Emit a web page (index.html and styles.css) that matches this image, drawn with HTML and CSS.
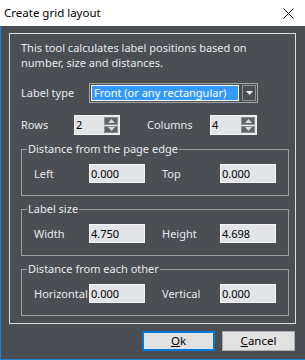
FILE: index.html
```html
<!DOCTYPE html>
<html lang="en">
<head>
  <meta charset="UTF-8">
  <meta name="viewport" content="width=device-width, initial-scale=1.0">
  <title>Create grid layout</title>
  <link rel="stylesheet" href="styles.css">
</head>
<body>
  <div class="window">
    <div class="titlebar">
      <span class="title">Create grid layout</span>
      <svg class="close" width="11" height="11" viewBox="0 0 11 11">
        <path d="M0.5 0.5 L10.5 10.5 M10.5 0.5 L0.5 10.5" stroke="#111" stroke-width="1" fill="none"/>
      </svg>
    </div>
    <div class="client">
      <div class="frame">
        <div class="intro">
          <div>This tool calculates label positions based on</div>
          <div>number, size and distances.</div>
        </div>

        <div class="row row-type">
          <span class="lbl lbl-type">Label type</span>
          <div class="combo">
            <span class="combo-text">Front (or any rectangular)</span>
            <span class="combo-btn">
              <svg width="7" height="4" viewBox="0 0 7 4"><path d="M0 0 H7 L3.5 4 Z" fill="#f0f0f0"/></svg>
            </span>
          </div>
        </div>

        <div class="row row-spin">
          <span class="lbl lbl-rows">Rows</span>
          <div class="spin">
            <span class="spin-val">2</span>
            <span class="spin-btns">
              <span class="spin-btn"><svg width="7" height="4" viewBox="0 0 7 4"><path d="M0 4 H7 L3.5 0 Z" fill="#d8d8d8"/></svg></span>
              <span class="spin-btn"><svg width="7" height="4" viewBox="0 0 7 4"><path d="M0 0 H7 L3.5 4 Z" fill="#d8d8d8"/></svg></span>
            </span>
          </div>
          <span class="lbl lbl-cols">Columns</span>
          <div class="spin spin-cols">
            <span class="spin-val">4</span>
            <span class="spin-btns">
              <span class="spin-btn"><svg width="7" height="4" viewBox="0 0 7 4"><path d="M0 4 H7 L3.5 0 Z" fill="#d8d8d8"/></svg></span>
              <span class="spin-btn"><svg width="7" height="4" viewBox="0 0 7 4"><path d="M0 0 H7 L3.5 4 Z" fill="#d8d8d8"/></svg></span>
            </span>
          </div>
        </div>

        <fieldset class="group group-first">
          <legend>Distance from the page edge</legend>
          <div class="fields">
            <span class="lbl">Left</span>
            <span class="field">0.000</span>
            <span></span>
            <span class="lbl">Top</span>
            <span class="field">0.000</span>
          </div>
        </fieldset>

        <fieldset class="group">
          <legend>Label size</legend>
          <div class="fields">
            <span class="lbl">Width</span>
            <span class="field">4.750</span>
            <span></span>
            <span class="lbl">Height</span>
            <span class="field">4.698</span>
          </div>
        </fieldset>

        <fieldset class="group">
          <legend>Distance from each other</legend>
          <div class="fields">
            <span class="lbl">Horizontal</span>
            <span class="field">0.000</span>
            <span></span>
            <span class="lbl">Vertical</span>
            <span class="field">0.000</span>
          </div>
        </fieldset>
      </div>

      <div class="buttons">
        <button class="btn btn-default"><u>O</u>k</button>
        <button class="btn"><u>C</u>ancel</button>
      </div>
    </div>
  </div>
</body>
</html>
```

FILE: styles.css
```css
* {
  box-sizing: border-box;
}
body {
  margin: 0;
  font-family: "Noto Sans", "Open Sans", sans-serif;
  font-size: 11px;
  background: #fff;
}
.window {
  width: 305px;
  height: 360px;
  display: flex;
  flex-direction: column;
}
.titlebar {
  height: 26px;
  background: #fff;
  color: #000;
  display: flex;
  align-items: center;
  justify-content: space-between;
  padding: 0 11px 0 4px;
}
.title {
  font-size: 11.5px;
  line-height: 14px;
}
.client {
  flex: 1;
  background: #4b4e52;
  border-left: 1px solid #1883d7;
  border-bottom: 1px solid #1883d7;
  padding: 7px 9px 0 8px;
  display: flex;
  flex-direction: column;
}
.frame {
  border: 1px solid #dedede;
  padding: 6px 6px 7px 11px;
  color: #e6eaef;
}
.intro {
  line-height: 15px;
  white-space: nowrap;
}
.row {
  display: flex;
  align-items: center;
  height: 20px;
}
.row-type {
  margin-top: 13px;
}
.row-spin {
  margin-top: 12px;
}
.lbl {
  line-height: 14px;
  white-space: nowrap;
}
.lbl-type {
  width: 68px;
}
.lbl-rows {
  width: 53px;
}
.lbl-cols {
  width: 63px;
  margin-left: 27px;
}

/* combo box */
.combo {
  width: 169px;
  height: 20px;
  border: 1px solid #a4a6a9;
  padding: 1px;
  display: flex;
  gap: 3px;
}
.combo-text {
  flex: 1;
  background: #3399ff;
  border: 1px solid #fff;
  color: #fff;
  padding-left: 2px;
  line-height: 14px;
  white-space: nowrap;
  overflow: hidden;
}
.combo-btn {
  width: 14px;
  border: 1px solid #8e9195;
  display: flex;
  align-items: center;
  justify-content: center;
}

/* spinners */
.spin {
  width: 46px;
  height: 20px;
  border: 1px solid #f2f2f2;
  background: #e2e4e8;
  display: flex;
}
.spin-cols {
  width: 47px;
}
.spin-val {
  flex: 1;
  color: #000;
  padding-left: 1px;
  line-height: 18px;
}
.spin-btns {
  width: 15px;
  display: flex;
  flex-direction: column;
  gap: 1px;
  padding: 1px 1px 1px 0;
  background: #e2e4e8;
}
.spin-btn {
  flex: 1;
  background: #5e6165;
  border: 1px solid #8c8f93;
  display: flex;
  align-items: center;
  justify-content: center;
}

/* groups */
.group {
  margin: 6px 0 0 0;
  padding: 0 0 12px 5px;
  border: 1px solid #9c9ea1;
  min-width: 0;
}
.group-first {
  margin-top: 7px;
}
.group legend {
  padding: 0 1px;
  line-height: 14px;
  color: #e6eaef;
}
.fields {
  display: grid;
  grid-template-columns: 55px 56px 17px 58px 56px;
  align-items: center;
  padding-left: 7px;
  margin-top: 8px;
}
.field {
  height: 19px;
  background: #e2e4e8;
  border: 1px solid #f4f4f4;
  color: #000;
  padding-left: 1px;
  line-height: 17px;
}

/* buttons */
.buttons {
  display: flex;
  justify-content: flex-end;
  gap: 7px;
  margin-top: 7px;
  padding-right: 1px;
}
.btn {
  width: 73px;
  height: 20px;
  background: #e1e1e1;
  border: 1px solid #adadad;
  font-family: inherit;
  font-size: 11.5px;
  color: #000;
  padding: 0;
  line-height: 16px;
}
.btn-default {
  border: 2px solid #0078d7;
}
```
